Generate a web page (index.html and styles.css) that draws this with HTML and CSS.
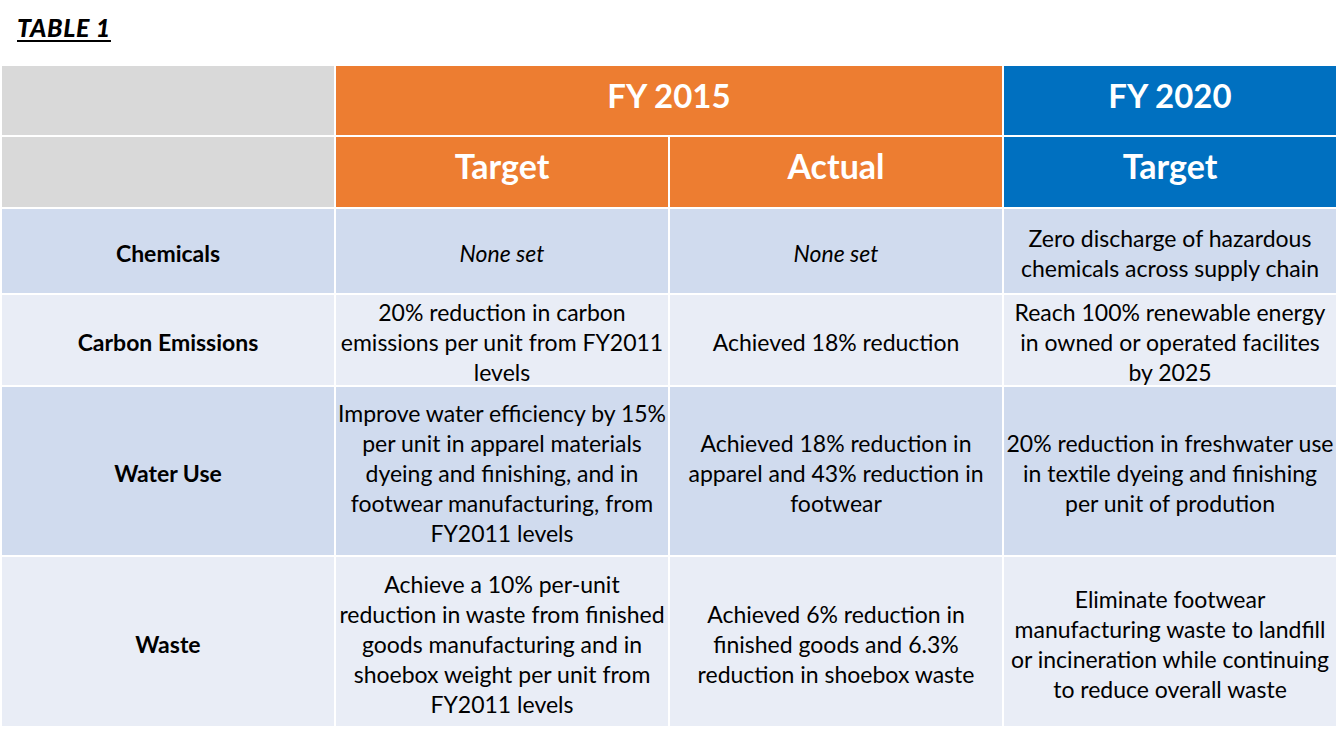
FILE: index.html
```html
<!DOCTYPE html>
<html>
<head>
<meta charset="utf-8">
<link rel="stylesheet" href="styles.css">
</head>
<body>
<div class="page">
  <h1 class="title">TABLE 1</h1>
  <div class="table">
    <div class="cell gray"></div>
    <div class="cell orange year span2">FY 2015</div>
    <div class="cell blue year">FY 2020</div>

    <div class="cell gray"></div>
    <div class="cell orange sub">Target</div>
    <div class="cell orange sub">Actual</div>
    <div class="cell blue sub">Target</div>

    <div class="cell dark label">Chemicals</div>
    <div class="cell dark"><em>None set</em></div>
    <div class="cell dark"><em>None set</em></div>
    <div class="cell dark">Zero discharge of hazardous<br>chemicals across supply chain</div>

    <div class="cell light label">Carbon Emissions</div>
    <div class="cell light">20% reduction in carbon<br>emissions per unit from FY2011<br>levels</div>
    <div class="cell light">Achieved 18% reduction</div>
    <div class="cell light">Reach 100% renewable energy<br>in owned or operated facilites<br>by 2025</div>

    <div class="cell dark label">Water Use</div>
    <div class="cell dark">Improve water efficiency by 15%<br>per unit in apparel materials<br>dyeing and finishing, and in<br>footwear manufacturing, from<br>FY2011 levels</div>
    <div class="cell dark">Achieved 18% reduction in<br>apparel and 43% reduction in<br>footwear</div>
    <div class="cell dark">20% reduction in freshwater use<br>in textile dyeing and finishing<br>per unit of prodution</div>

    <div class="cell light label">Waste</div>
    <div class="cell light">Achieve a 10% per-unit<br>reduction in waste from finished<br>goods manufacturing and in<br>shoebox weight per unit from<br>FY2011 levels</div>
    <div class="cell light">Achieved 6% reduction in<br>finished goods and 6.3%<br>reduction in shoebox waste</div>
    <div class="cell light">Eliminate footwear<br>manufacturing waste to landfill<br>or incineration while continuing<br>to reduce overall waste</div>
  </div>
</div>
</body>
</html>
```
FILE: styles.css
```css
html, body {
  margin: 0;
  padding: 0;
  background: #ffffff;
}
.page {
  padding: 12px 0 0 2px;
  font-family: Lato, "Open Sans", sans-serif;
  color: #000;
}
.title {
  margin: 0 0 24px 15px;
  height: 30px;
  font-size: 25px;
  font-weight: 900;
  font-style: italic;
  text-decoration: underline;
  text-decoration-thickness: 2px;
  text-underline-offset: 3px;
  line-height: 30px;
  letter-spacing: 0.6px;
}
.table {
  display: grid;
  grid-template-columns: 332px 332px 332px 332px;
  grid-template-rows: 69px 70px 84px 90px 168px 169px;
  gap: 2px;
  background: #fff;
  width: 1334px;
}
.cell {
  display: flex;
  align-items: center;
  justify-content: center;
  text-align: center;
  font-size: 23px;
  line-height: 30px;
  white-space: nowrap;
  box-sizing: border-box;
}
.dark, .light {
  padding-top: 4px;
}
.span2 { grid-column: span 2; }
.gray { background: #d9d9d9; }
.orange { background: #ed7d31; color: #fff; }
.blue { background: #0070c0; color: #fff; }
.dark { background: #d0dbee; }
.light { background: #e9edf6; }
.year {
  font-size: 33px;
  font-weight: 700;
  padding-bottom: 12px;
}
.sub {
  font-size: 34px;
  font-weight: 700;
  padding-bottom: 12px;
}
.label {
  font-weight: 700;
}
```
